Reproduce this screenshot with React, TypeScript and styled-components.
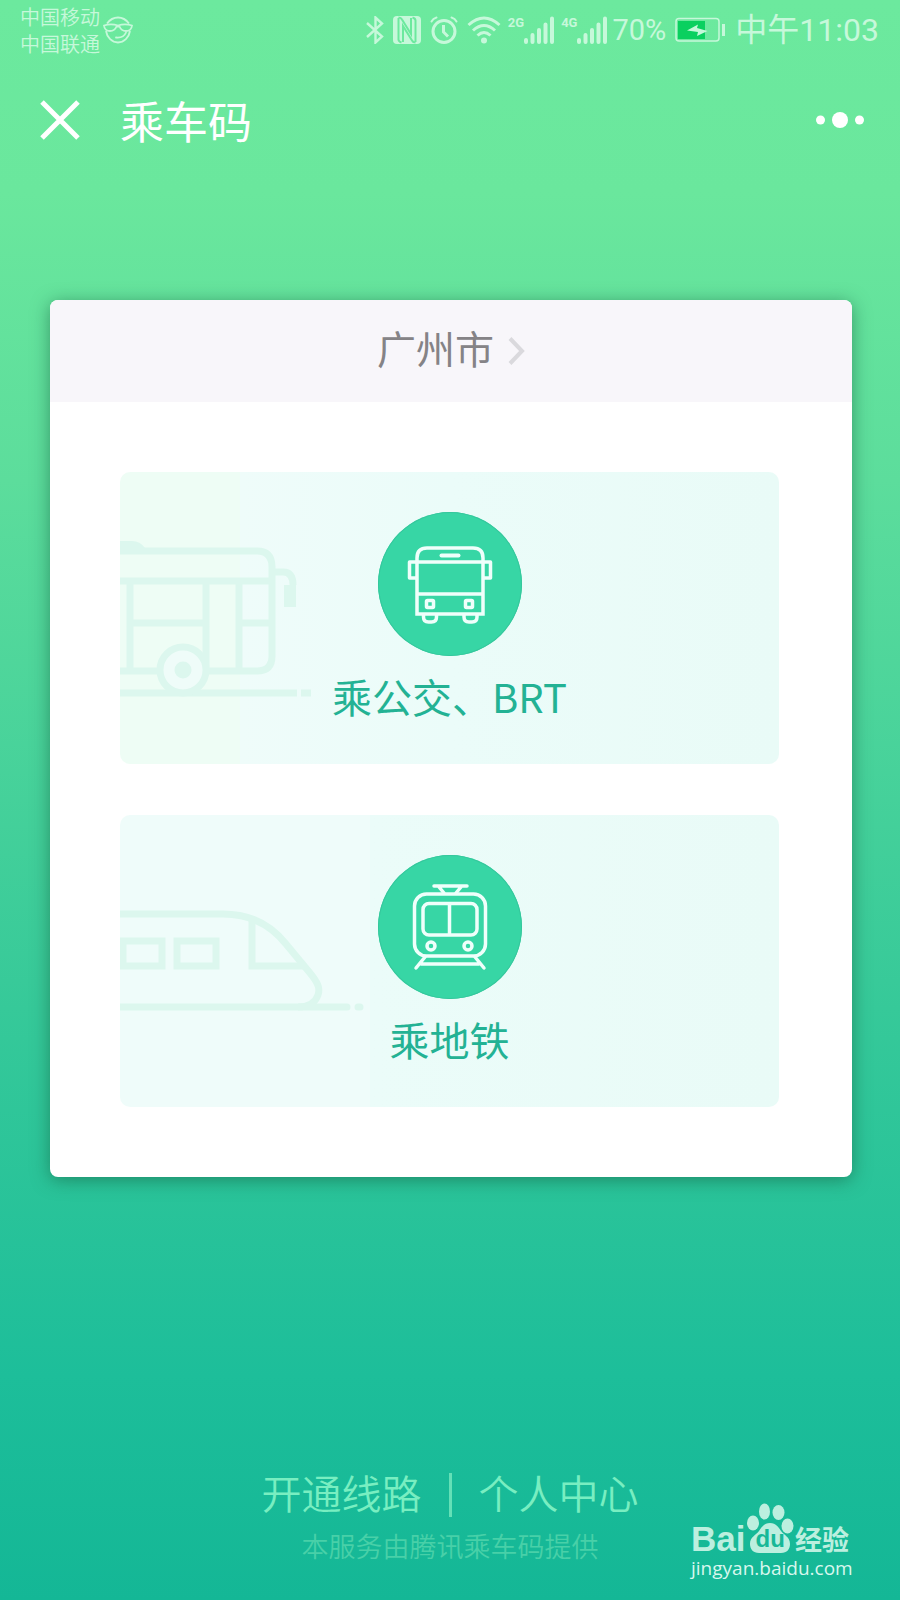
import React from 'react';
import styled, { createGlobalStyle } from 'styled-components';

const GlobalStyle = createGlobalStyle`
  * { box-sizing: border-box; }
  body {
    margin: 0;
    font-family: "Noto Sans CJK SC", sans-serif;
  }
  button {
    border: 0;
    padding: 0;
    background: none;
    font: inherit;
    color: inherit;
    cursor: pointer;
  }
  a { color: inherit; text-decoration: none; }
  svg { display: block; flex: none; }
`;

const Page = styled.div`
  position: relative;
  display: flex;
  flex-direction: column;
  min-height: 100vh;
  background: linear-gradient(180deg, #6ce99e 0%, #6ae79d 12%, #5cdd9c 30%, #36c999 63%, #1dbe9a 86%, #14b796 100%);
`;

const StatusBar = styled.header`
  display: flex;
  align-items: center;
  justify-content: space-between;
  height: 60px;
  padding: 0 21px 0 20px;
  color: #c6f8da;
`;

const StatusGroup = styled.div<{ $gap: number }>`
  display: flex;
  align-items: center;
  gap: ${(p) => p.$gap}px;
`;

const Carriers = styled.div`
  font-size: 20px;
  line-height: 27px;
  font-weight: 350;
`;

const Signal = styled.div`
  display: flex;
  align-items: flex-start;
`;

const Generation = styled.span`
  font-family: Roboto, sans-serif;
  font-size: 13px;
  line-height: 14px;
  font-weight: 700;
`;

const StatusText = styled.span<{ $size: number }>`
  font-family: Roboto, "Noto Sans CJK SC", sans-serif;
  font-size: ${(p) => p.$size}px;
  line-height: 40px;
`;

const NavBar = styled.nav`
  display: flex;
  align-items: center;
  height: 120px;
  padding: 0 36px 0 40px;
  color: #fff;
`;

const Title = styled.h1`
  flex: 1;
  margin: 0 0 0 40px;
  font-size: 44px;
  line-height: 60px;
  font-weight: 400;
`;

const Card = styled.main`
  margin: 120px 48px 0 50px;
  border-radius: 8px;
  background: #fff;
  box-shadow: 0 3px 18px rgba(20, 90, 60, 0.55);
  overflow: hidden;
`;

const CityButton = styled.button`
  display: flex;
  align-items: center;
  justify-content: center;
  gap: 14px;
  width: 100%;
  height: 102px;
  background: #f8f6fa;
  color: #858386;
  font-size: 39px;
  line-height: 56px;
`;

const CityName = styled.span`
  padding-bottom: 8px;
`;

const Tiles = styled.div`
  display: flex;
  flex-direction: column;
  gap: 51px;
  padding: 70px 73px 70px 70px;
`;

const Tile = styled.button<{ $tint: string }>`
  position: relative;
  display: flex;
  flex-direction: column;
  align-items: center;
  gap: 12px;
  width: 100%;
  height: 292px;
  padding-top: 40px;
  border-radius: 10px;
  background: ${(p) => p.$tint};
  overflow: hidden;
`;

const Backdrop = styled.svg`
  position: absolute;
  left: 0;
  top: 0;
  fill: none;
  stroke: #dcf7ee;
  stroke-width: 7;
`;

const Badge = styled.span`
  position: relative;
  width: 144px;
  height: 144px;
  border-radius: 50%;
  background: #37d6a5;
  box-shadow: inset 0 0 0 1px #35c79c;
`;

const TileLabel = styled.span`
  position: relative;
  color: #23b294;
  font-size: 40px;
  line-height: 56px;
`;

const Footer = styled.footer`
  display: flex;
  flex-direction: column;
  align-items: center;
  margin-top: auto;
  padding: 40px 0 34px;
`;

const FooterLinks = styled.div`
  display: flex;
  align-items: center;
  gap: 27px;
  color: #78eec1;
  font-size: 40px;
  line-height: 60px;
  font-weight: 350;
`;

const Divider = styled.span`
  width: 3px;
  height: 44px;
  margin-top: 6px;
  background: #64e0b7;
`;

const Provider = styled.p`
  margin: 4px 0 0;
  color: #48d0a8;
  font-size: 27px;
  line-height: 40px;
  font-weight: 350;
`;

const Watermark = styled.div`
  position: absolute;
  right: 51px;
  bottom: 18px;
  width: 158px;
  color: #bcefdf;
  white-space: nowrap;
`;

const Brand = styled.div`
  display: flex;
  align-items: flex-end;
  justify-content: space-between;
  height: 52px;
`;

const BrandLatin = styled.span`
  font-family: "Liberation Sans", sans-serif;
  font-size: 35px;
  line-height: 30px;
  font-weight: 700;
`;

const BrandHan = styled.span`
  font-size: 27px;
  line-height: 30px;
  font-weight: 700;
`;

const Paw = styled.span`
  position: relative;
  width: 48px;
  height: 52px;
`;

const PawText = styled.span`
  position: absolute;
  left: 0;
  right: 0;
  bottom: 3px;
  color: #17b897;
  font-family: "Liberation Sans", sans-serif;
  font-size: 24px;
  line-height: 24px;
  font-weight: 700;
  text-align: center;
`;

const BrandUrl = styled.div`
  color: #d8f7ee;
  font-family: "Open Sans", sans-serif;
  font-size: 19px;
  line-height: 28px;
`;

const CoolFace = () => (
  <svg width="30" height="28" viewBox="0 0 30 28" fill="none" stroke="currentColor" strokeWidth="1.800">
    <path d="M4 7.500C7 3.500 11 1.500 15 1.500s8 2 11 6M3 15C4 21.500 9 26.500 15 26.500S26 21.500 27 15" />
    <path d="M1 9.500c4.500-1.500 9.500-1.500 14 0 4.500-1.500 9.500-1.500 14 0-.5 4-2.500 5.500-6 5.500-3.500 0-5.500-2-6.500-4.500h-3c-1 2.500-3 4.500-6.500 4.500s-5.500-1.500-6-5.500z" />
    <path d="M13 21.500c5 .5 8.500-1.500 10-5" strokeLinecap="round" />
  </svg>
);

const BluetoothIcon = () => (
  <svg width="18" height="28" viewBox="0 0 18 28" fill="none" stroke="currentColor" strokeWidth="2.400">
    <path d="M1 7l15 13.500-6.500 6V1.500L16 7.500 1 21" />
  </svg>
);

const NfcIcon = () => (
  <svg width="28" height="28" viewBox="0 0 28 28" fill="none" stroke="#6ce99e" strokeWidth="2">
    <rect width="28" height="28" rx="4" fill="currentColor" stroke="none" />
    <path d="M5.500 2v21.500q0 2 3 3M22.500 26V4.500q0-2-3-3" />
    <path d="M10 26V10l9 14.500q1 2 3.500 2M18 2v16L9 3.500Q8 1.500 5.500 1.500" />
  </svg>
);

const AlarmIcon = () => (
  <svg width="28" height="28" viewBox="0 0 28 28" fill="none" stroke="currentColor" strokeWidth="3">
    <circle cx="14" cy="15.500" r="11" />
    <path d="M13.500 9v7l4.500 4.500" />
    <path d="M1.500 5.500Q3 2.500 6.500 1.500M26.500 5.500Q25 2.500 21.500 1.500" strokeWidth="2" strokeLinecap="round" />
  </svg>
);

const WifiIcon = () => (
  <svg width="34" height="28" viewBox="0 0 34 28" fill="none" stroke="currentColor" strokeWidth="3">
    <path d="M1.500 9Q17-5 32.500 9M6 14.500Q17 4.500 28 14.500M10.500 19.500Q17 13.500 23.500 19.500" />
    <circle cx="17" cy="24.500" r="3" fill="currentColor" stroke="none" />
  </svg>
);

const BarsIcon = () => (
  <svg width="30" height="28" viewBox="0 0 30 28" fill="none" stroke="currentColor" strokeWidth="4" strokeLinecap="round">
    <path d="M2 24v2M8.500 19v7M15 14v12M21.500 8.500V26M28 2.500V26" />
  </svg>
);

const BatteryIcon = () => (
  <svg width="51" height="26" viewBox="0 0 51 26">
    <rect x="1" y="1.500" width="43" height="22.500" rx="3" fill="none" stroke="currentColor" strokeWidth="1.500" />
    <rect x="3" y="4" width="27" height="18" fill="#0ad05f" />
    <path d="M12 13.500L23 7.500l-1 3.500 10.500 3L22 19l1-4z" fill="currentColor" />
    <path d="M48.500 7v12" stroke="currentColor" strokeWidth="3" />
  </svg>
);

const CloseIcon = () => (
  <svg width="40" height="40" viewBox="0 0 40 40" stroke="currentColor" strokeWidth="5">
    <path d="M2 2l36 36M38 2L2 38" />
  </svg>
);

const MoreIcon = () => (
  <svg width="48" height="16" viewBox="0 0 48 16" fill="currentColor">
    <circle cx="4.500" cy="8" r="4.500" />
    <circle cx="24" cy="8" r="8" />
    <circle cx="43.500" cy="8" r="4.500" />
  </svg>
);

const ChevronIcon = () => (
  <svg width="17" height="28" viewBox="0 0 17 28" fill="none" stroke="#dad9dd" strokeWidth="4">
    <path d="M2 1.500L14 14 2 26.500" />
  </svg>
);

const BusBackdrop = () => (
  <Backdrop width="200" height="292" viewBox="0 0 200 292" aria-hidden="true">
    <path d="M0 69h12q8 0 13 7v6H0z" fill="#dcf7ee" stroke="none" />
    <path d="M0 79H137q15 0 15 16V184q0 15-15 15H0M0 109H152M10 109v90M86 109v90M119 109v90M10 151H86M119 151h33M0 221H177" />
    <path d="M181 221h10" />
    <path d="M155 100h8q10 0 10 13" />
    <rect x="164" y="113" width="12" height="22" fill="#dcf7ee" stroke="none" />
    <circle cx="63" cy="198" r="23" fill="#effcf9" />
    <circle cx="63" cy="198" r="8.500" fill="#dcf7ee" stroke="none" />
  </Backdrop>
);

const TrainBackdrop = () => (
  <Backdrop width="260" height="292" viewBox="0 0 260 292" aria-hidden="true">
    <path d="M0 99H103C131 99 151 110 166 129L190 158C199 169 200 174 198 180Q194 192 178 192" />
    <path d="M0 192H227M238 192h2" strokeLinecap="round" />
    <path d="M3 126H42V151H3zM57 126H96V151H57zM132 104V151H184" />
  </Backdrop>
);

const BusIcon = () => (
  <svg width="144" height="144" viewBox="0 0 144 144" fill="none" stroke="#effffb" strokeWidth="3.500">
    <path d="M39 102V46q0-10 10-10h46q10 0 10 10v56zM39 50h66M39 82h66" />
    <path d="M39 50h-7.500v16H39M105 50h7.500v16H105" strokeLinejoin="round" />
    <path d="M45.500 102v3q0 5 5 5h3q5 0 5-5v-3M86 102v3q0 5 5 5h3q5 0 5-5v-3" />
    <path d="M63.500 43.500h17" strokeLinecap="round" strokeWidth="4" />
    <rect x="48.500" y="88.500" width="7" height="7" rx="1" />
    <rect x="87.500" y="88.500" width="7" height="7" rx="1" />
  </svg>
);

const TrainIcon = () => (
  <svg width="144" height="144" viewBox="0 0 144 144" fill="none" stroke="#effffb" strokeWidth="3.500">
    <rect x="36.500" y="39" width="71" height="62" rx="12" />
    <rect x="45" y="48.500" width="54" height="31.500" rx="6" />
    <path d="M71.500 48v32" />
    <circle cx="53" cy="91" r="4" />
    <circle cx="90" cy="91" r="4" />
    <path d="M56 31h33M61 32l5 6M83 32l-5 6M47 102l-9 11M97 102l9 11M43 109h58" strokeLinecap="round" />
  </svg>
);

const PawIcon = () => (
  <svg width="48" height="52" viewBox="0 0 48 52" fill="currentColor">
    <ellipse cx="7" cy="21" rx="6" ry="7.500" />
    <ellipse cx="18.500" cy="9.500" rx="5.500" ry="8" />
    <ellipse cx="32.500" cy="10.500" rx="6" ry="7.500" />
    <ellipse cx="41.500" cy="24" rx="6" ry="7.500" />
    <path d="M24 21c5 0 8 3 11 8 3 4 9 6 9 13 0 5-3 9-9 9H13c-6 0-9-4-9-9 0-7 6-9 9-13 3-5 6-8 11-8z" />
  </svg>
);

export default function App() {
  return (
    <>
      <GlobalStyle />
      <Page>
        <StatusBar>
          <StatusGroup $gap={3}>
            <Carriers>
              <div>中国移动</div>
              <div>中国联通</div>
            </Carriers>
            <CoolFace />
          </StatusGroup>
          <StatusGroup $gap={9}>
            <BluetoothIcon />
            <NfcIcon />
            <AlarmIcon />
            <StatusGroup $gap={7}>
              <WifiIcon />
              <Signal>
                <Generation>2G</Generation>
                <BarsIcon />
              </Signal>
              <StatusGroup $gap={5}>
                <Signal>
                  <Generation>4G</Generation>
                  <BarsIcon />
                </Signal>
                <StatusText $size={29}>70%</StatusText>
              </StatusGroup>
            </StatusGroup>
            <BatteryIcon />
            <StatusText $size={32}>中午11:03</StatusText>
          </StatusGroup>
        </StatusBar>

        <NavBar>
          <button type="button" aria-label="关闭">
            <CloseIcon />
          </button>
          <Title>乘车码</Title>
          <button type="button" aria-label="更多">
            <MoreIcon />
          </button>
        </NavBar>

        <Card>
          <CityButton type="button">
            <CityName>广州市</CityName>
            <ChevronIcon />
          </CityButton>
          <Tiles>
            <Tile type="button" $tint="linear-gradient(90deg, #eefdf5 120px, #effcfa 120px, #ebfcf9 50%, #e9fbf7)">
              <BusBackdrop />
              <Badge>
                <BusIcon />
              </Badge>
              <TileLabel>乘公交、BRT</TileLabel>
            </Tile>
            <Tile type="button" $tint="linear-gradient(90deg, #effcfa 250px, #ebfcf9 250px, #e9fbf7)">
              <TrainBackdrop />
              <Badge>
                <TrainIcon />
              </Badge>
              <TileLabel>乘地铁</TileLabel>
            </Tile>
          </Tiles>
        </Card>

        <Footer>
          <FooterLinks>
            <a href="#routes">开通线路</a>
            <Divider />
            <a href="#profile">个人中心</a>
          </FooterLinks>
          <Provider>本服务由腾讯乘车码提供</Provider>
        </Footer>

        <Watermark>
          <Brand>
            <BrandLatin>Bai</BrandLatin>
            <Paw>
              <PawIcon />
              <PawText>du</PawText>
            </Paw>
            <BrandHan>经验</BrandHan>
          </Brand>
          <BrandUrl>jingyan.baidu.com</BrandUrl>
        </Watermark>
      </Page>
    </>
  );
}
